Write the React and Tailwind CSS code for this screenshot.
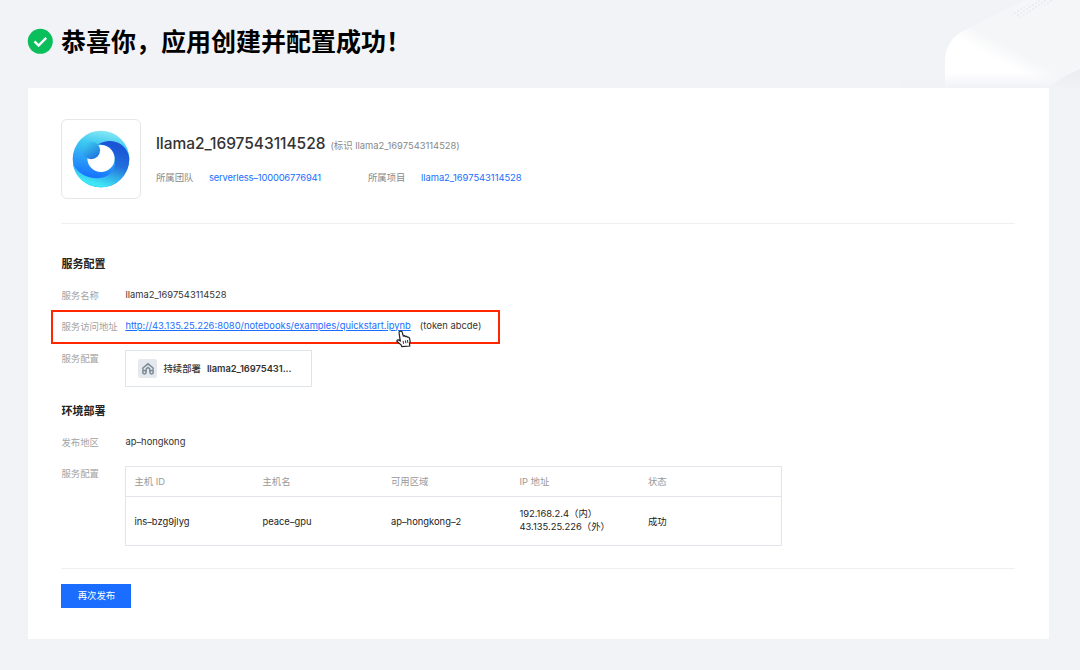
const hosts = [
  {
    id: 'ins–bzg9jlyg',
    name: 'peace–gpu',
    zone: 'ap–hongkong–2',
    inner: '192.168.2.4（内）',
    outer: '43.135.25.226（外）',
    status: '成功',
  },
];

const columns = ['主机 ID', '主机名', '可用区域', 'IP 地址', '状态'];

function SuccessIcon() {
  return (
    <svg className="size-[26px]" viewBox="0 0 26 26" fill="none">
      <circle cx="13.3" cy="13.3" r="12.5" fill="#0abf5b" />
      <path d="M7.5 13.4l4.1 4.2 7.6-7.7" stroke="#fff" strokeWidth="2.4" />
    </svg>
  );
}

function AppLogo() {
  return (
    <svg className="size-[58px]" viewBox="0 0 58 58">
      <defs>
        <linearGradient id="ring" x1="0.55" y1="0" x2="0.4" y2="0.85">
          <stop offset="0" stopColor="#86e8f4" />
          <stop offset="0.3" stopColor="#3cc8f1" />
          <stop offset="1" stopColor="#1670ff" />
        </linearGradient>
        <linearGradient id="swirl" x1="0.7" y1="0.1" x2="0.35" y2="1">
          <stop offset="0" stopColor="#1a55d6" />
          <stop offset="0.4" stopColor="#2272dd" />
          <stop offset="0.9" stopColor="#3fe6f5" />
        </linearGradient>
        <linearGradient id="dot" x1="0.2" y1="0" x2="0.8" y2="1">
          <stop offset="0" stopColor="#3fd0f0" />
          <stop offset="1" stopColor="#1c6fe0" />
        </linearGradient>
      </defs>
      <circle cx="29" cy="29" r="28.3" fill="url(#ring)" />
      <path
        d="M26 14.5C36 8 53 10 57.2 27C58 44 45 57.3 29 57.3C15 57.3 3 48 1 34C7 46 20 50 31 47.5C38 45.5 42 40 43 34C44 24 38 14 26 14.5Z"
        fill="url(#swirl)"
      />
      <circle cx="29" cy="28.5" r="13.6" fill="#fff" />
      <circle cx="19.2" cy="20.3" r="8.9" fill="url(#dot)" />
    </svg>
  );
}

function DeployIcon() {
  return (
    <svg className="size-3.5" viewBox="0 0 14 14" fill="none" stroke="#7b8994" strokeWidth="1.5">
      <path d="M1.9 8.4V6L7 1.8 12.1 6v2.4" />
      <circle cx="3.4" cy="10.2" r="1.7" />
      <circle cx="10.6" cy="10.2" r="1.7" />
      <path d="M5.2 9.5V6.9L7 5.4l1.8 1.5v2.6" />
    </svg>
  );
}

function HandCursor() {
  return (
    <svg className="absolute left-[270px] top-[12px] h-[18px] w-[17px]" viewBox="0 0 17 19">
      <path
        d="M5 1.2c1-.4 1.8.2 2.1 1.1l1.2 4.1c.8-.5 1.7-.3 2.2.5.8-.5 1.7-.2 2.1.6 1-.3 1.9.1 2.2 1.2l.7 3.2-.7 2.6.3 2.4-8.4.6-.8-1.8-4.2-3.5c-.7-.8.3-2 1.4-1.7l2 1L3.8 2.9c-.2-.8.3-1.4 1.2-1.7Z"
        fill="#fff"
        stroke="#222"
        strokeWidth="1.3"
      />
      <path d="M8 11.5l.6 3M10.5 11l.5 3M12.7 10.6l.4 3" stroke="#222" />
    </svg>
  );
}

/* Pale device shape behind the top-right corner */
function Backdrop() {
  return (
    <svg className="absolute right-0 top-0 h-[88px] w-[180px]" viewBox="0 0 180 88">
      <defs>
        <linearGradient id="body" x1="94" y1="58" x2="102" y2="43" gradientUnits="userSpaceOnUse">
          <stop offset="0" stopColor="#fff" />
          <stop offset="1" stopColor="#f5f6f8" />
        </linearGradient>
        <linearGradient id="fade" x1="0" y1="72" x2="0" y2="88" gradientUnits="userSpaceOnUse">
          <stop offset="0" stopColor="#f1f2f6" stopOpacity="0" />
          <stop offset="1" stopColor="#f1f2f6" />
        </linearGradient>
        <pattern id="holes" width="6" height="4" patternUnits="userSpaceOnUse">
          <circle cx="1" cy="1" r="0.7" fill="#dcdee2" />
          <circle cx="4" cy="3" r="0.7" fill="#dcdee2" />
        </pattern>
      </defs>
      <path d="M45 88V62C45 46 53 36 63 31L125 0H180V88Z" fill="url(#body)" />
      <path d="M110 14L137 0H156L119 18Z" fill="url(#holes)" />
      <path d="M150 88Q155 80 180 69V88Z" fill="#ebedf0" />
      <path d="M0 72H180V88H0Z" fill="url(#fade)" />
    </svg>
  );
}

function Field({ label, className = '', children }) {
  return (
    <div className={`flex items-start ${className}`}>
      <div className="w-16 shrink-0 whitespace-nowrap pt-px leading-4 text-[#a3a3a3]">{label}</div>
      {children}
    </div>
  );
}

export default function App() {
  return (
    <div className="relative h-[670px] w-[1080px] overflow-hidden bg-[#f2f3f7] font-[Inter,'Noto_Sans_CJK_SC',sans-serif] text-[9.4px] text-[#333]">
      <Backdrop />
      <header className="relative flex h-[88px] items-start gap-2 pl-[27px] pt-7">
        <SuccessIcon />
        <h1 className="whitespace-nowrap text-[25px] font-bold leading-[28px] text-black">
          恭喜你，应用创建并配置成功！
        </h1>
      </header>

      <main className="relative ml-7 h-[551px] w-[1021px] bg-white pl-[33.4px] pr-[34px] pt-[31px]">
        <section className="flex h-[105px] border-b border-[#f0f0f2]">
          <div className="flex size-20 items-center justify-center rounded-md border border-[#e5e7eb]">
            <AppLogo />
          </div>
          <div className="ml-[14.6px] pt-[15px]">
            <div className="flex items-baseline gap-[5px] leading-5">
              <span className="text-[15.5px] font-medium tracking-[-0.03px]">llama2_1697543114528</span>
              <span className="text-[#888]">(标识 llama2_1697543114528)</span>
            </div>
            <div className="mt-3.5 flex leading-4">
              <span className="w-[53px] text-[#888]">所属团队</span>
              <a className="w-[159px] tracking-[-0.17px] text-[#1a6dff]">serverless–100006776941</a>
              <span className="w-[53px] text-[#888]">所属项目</span>
              <a className="tracking-[-0.03px] text-[#1a6dff]">llama2_1697543114528</a>
            </div>
          </div>
        </section>

        <section className="pt-8">
          <h2 className="text-[11px] font-bold leading-4 text-[#222]">服务配置</h2>
          <Field label="服务名称" className="mt-[15px]">
            <span className="leading-4">llama2_1697543114528</span>
          </Field>
          <div className="-ml-[10px] mt-1.5 flex h-[34px] w-[449px] items-center border-2 border-[#ff2600] pb-0.5 pl-2">
            <Field label="服务访问地址">
              <div className="relative whitespace-nowrap leading-4">
                <a className="text-[#1a6dff] underline">
                  http://43.135.25.226:8080/notebooks/examples/quickstart.ipynb
                </a>
                <span className="ml-[9px]">(token abcde)</span>
                <HandCursor />
              </div>
            </Field>
          </div>
          <Field label="服务配置" className="mt-[6px]">
            <div className="flex h-[37px] w-[187px] items-center border border-[#dfe3ea] pl-3">
              <div className="flex size-[19px] items-center justify-center rounded-xs bg-[#e5e9ee]">
                <DeployIcon />
              </div>
              <span className="ml-[6px] pt-px font-medium">持续部署</span>
              <span className="ml-[6px] pt-px font-semibold tracking-[-0.05px]">llama2_16975431...</span>
            </div>
          </Field>
        </section>

        <section className="pt-4">
          <h2 className="text-[11px] font-bold leading-4 text-[#222]">环境部署</h2>
          <Field label="发布地区" className="mt-[15px]">
            <span className="leading-4">ap–hongkong</span>
          </Field>
          <Field label="服务配置" className="mt-3.5">
            <table className="mt-px h-20 w-[657px] table-fixed border border-[#e3e5ea] text-left">
              <colgroup>
                <col className="w-[128.5px]" />
                <col className="w-[128.5px]" />
                <col className="w-[128.5px]" />
                <col className="w-[128.5px]" />
                <col />
              </colgroup>
              <thead>
                <tr className="h-[30px] border-b border-[#e3e5ea] text-[#999]">
                  {columns.map((col) => (
                    <th key={col} className="pl-2 pt-0.5 font-normal">{col}</th>
                  ))}
                </tr>
              </thead>
              <tbody>
                {hosts.map((host) => (
                  <tr key={host.id} className="text-[#222]">
                    <td className="pl-2 pt-0.5">{host.id}</td>
                    <td className="pl-2 pt-0.5">{host.name}</td>
                    <td className="pl-2 pt-0.5">{host.zone}</td>
                    <td className="whitespace-nowrap pb-0.5 pl-2 leading-[13px]">
                      <div>{host.inner}</div>
                      <div>{host.outer}</div>
                    </td>
                    <td className="pl-2 pt-0.5">{host.status}</td>
                  </tr>
                ))}
              </tbody>
            </table>
          </Field>
        </section>

        <footer className="mt-[22px] border-t border-[#f0f0f2] pt-[15px]">
          <button className="h-6 w-[70px] bg-[#1a6dff] text-[9.4px] text-white">再次发布</button>
        </footer>
      </main>
    </div>
  );
}
